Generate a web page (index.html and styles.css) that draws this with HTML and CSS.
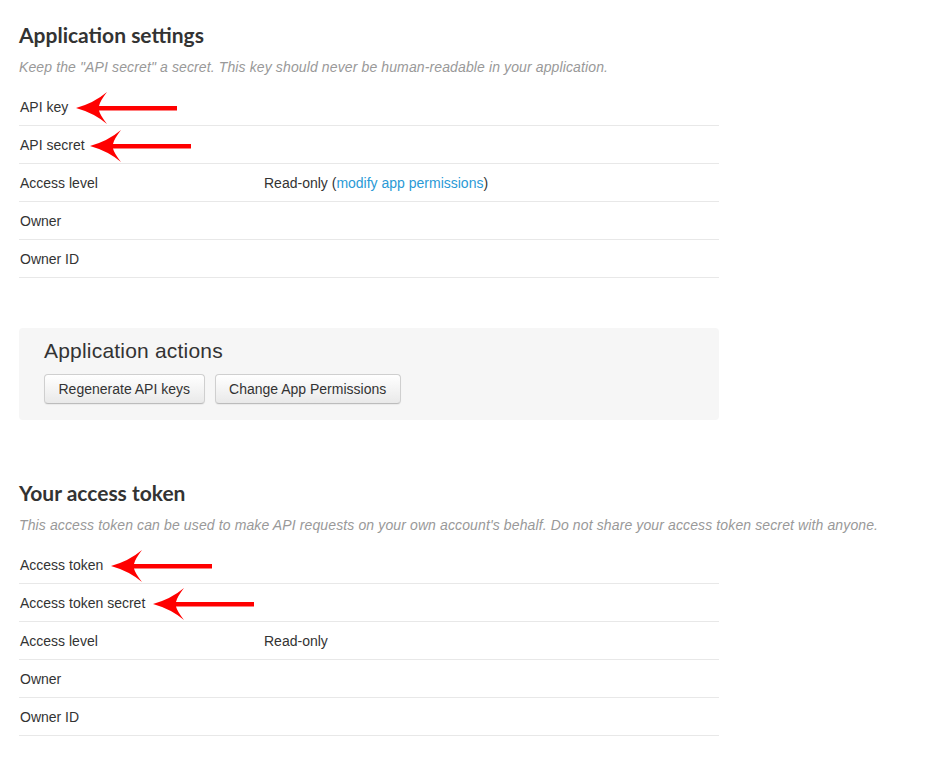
FILE: index.html
```html
<!DOCTYPE html>
<html lang="en">
<head>
<meta charset="utf-8">
<title>Application settings</title>
<link rel="stylesheet" href="styles.css">
</head>
<body>
<div class="page">
  <section class="section">
    <h2 class="heading">Application settings</h2>
    <p class="hint">Keep the "API secret" a secret. This key should never be human-readable in your application.</p>
    <div class="table">
      <div class="row"><div class="label">API key<svg class="arrow" viewBox="0 0 102 32" width="102" height="32"><path d="M0,16 Q18,11 31,0 Q24,9 23,14 L101,14 L101,18.5 L23,18.5 Q24,23 31,32 Q18,21 0,16 Z"/></svg></div><div class="value"></div></div>
      <div class="row"><div class="label">API secret<svg class="arrow arrow-close" viewBox="0 0 102 32" width="102" height="32"><path d="M0,16 Q18,11 31,0 Q24,9 23,14 L101,14 L101,18.5 L23,18.5 Q24,23 31,32 Q18,21 0,16 Z"/></svg></div><div class="value"></div></div>
      <div class="row"><div class="label">Access level</div><div class="value">Read-only (<a class="link" href="#">modify app permissions</a>)</div></div>
      <div class="row"><div class="label">Owner</div><div class="value"></div></div>
      <div class="row"><div class="label">Owner ID</div><div class="value"></div></div>
    </div>
  </section>

  <section class="actions">
    <h3 class="actions-title">Application actions</h3>
    <div class="buttons">
      <button class="btn" type="button">Regenerate API keys</button>
      <button class="btn" type="button">Change App Permissions</button>
    </div>
  </section>

  <section class="section section-token">
    <h2 class="heading">Your access token</h2>
    <p class="hint">This access token can be used to make API requests on your own account's behalf. Do not share your access token secret with anyone.</p>
    <div class="table">
      <div class="row"><div class="label">Access token<svg class="arrow" viewBox="0 0 102 32" width="102" height="32"><path d="M0,16 Q18,11 31,0 Q24,9 23,14 L101,14 L101,18.5 L23,18.5 Q24,23 31,32 Q18,21 0,16 Z"/></svg></div><div class="value"></div></div>
      <div class="row"><div class="label">Access token secret<svg class="arrow" viewBox="0 0 102 32" width="102" height="32"><path d="M0,16 Q18,11 31,0 Q24,9 23,14 L101,14 L101,18.5 L23,18.5 Q24,23 31,32 Q18,21 0,16 Z"/></svg></div><div class="value"></div></div>
      <div class="row"><div class="label">Access level</div><div class="value">Read-only</div></div>
      <div class="row"><div class="label">Owner</div><div class="value"></div></div>
      <div class="row"><div class="label">Owner ID</div><div class="value"></div></div>
    </div>
  </section>
</div>
</body>
</html>
```

FILE: styles.css
```css
html, body {
  margin: 0;
  padding: 0;
  background: #ffffff;
}

body {
  font-family: "Liberation Sans", Arial, sans-serif;
  font-size: 14px;
  color: #333333;
}

.page {
  padding: 23px 0 30px 19px;
  width: 700px;
}

.section {
  display: flex;
  flex-direction: column;
}

.section-token {
  margin-top: 61px;
}

.heading {
  margin: 0;
  font-family: Lato, "Liberation Sans", sans-serif;
  font-weight: 700;
  font-size: 21px;
  line-height: 24px;
  color: #333333;
  white-space: nowrap;
}

.hint {
  margin: 11px 0 0 0;
  font-size: 14px;
  line-height: 18px;
  font-style: italic;
  letter-spacing: 0.12px;
  color: #999999;
  white-space: nowrap;
}

.table {
  margin-top: 12px;
  display: flex;
  flex-direction: column;
}

.row {
  display: flex;
  align-items: center;
  height: 37px;
  border-bottom: 1px solid #e8e8e8;
  padding-left: 1px;
}

.label {
  width: 244px;
  flex: none;
  display: flex;
  align-items: center;
  white-space: nowrap;
}

.value {
  flex: 1;
  white-space: nowrap;
}

.link {
  color: #2a9ad6;
  text-decoration: none;
}

.arrow {
  flex: none;
  margin-left: 8px;
  fill: #ff0000;
  position: relative;
  top: 1px;
}

.arrow-close {
  margin-left: 5px;
}

.actions {
  margin-top: 50px;
  background: #f6f6f6;
  border-radius: 4px;
  padding: 12px 25px 16px 25px;
}

.actions-title {
  margin: 0;
  font-size: 21px;
  line-height: 22px;
  font-weight: 400;
  letter-spacing: 0.2px;
  color: #333333;
}

.buttons {
  display: flex;
  gap: 10px;
  margin-top: 12px;
}

.btn {
  height: 30px;
  padding: 0 13.5px;
  font-family: "Liberation Sans", Arial, sans-serif;
  font-size: 14px;
  color: #333333;
  background: linear-gradient(#ffffff, #e9e9e9);
  border: 1px solid #cfcfcf;
  border-bottom-color: #bcbcbc;
  border-radius: 4px;
  box-shadow: 0 1px 1px rgba(0, 0, 0, 0.05);
  cursor: pointer;
}
```
